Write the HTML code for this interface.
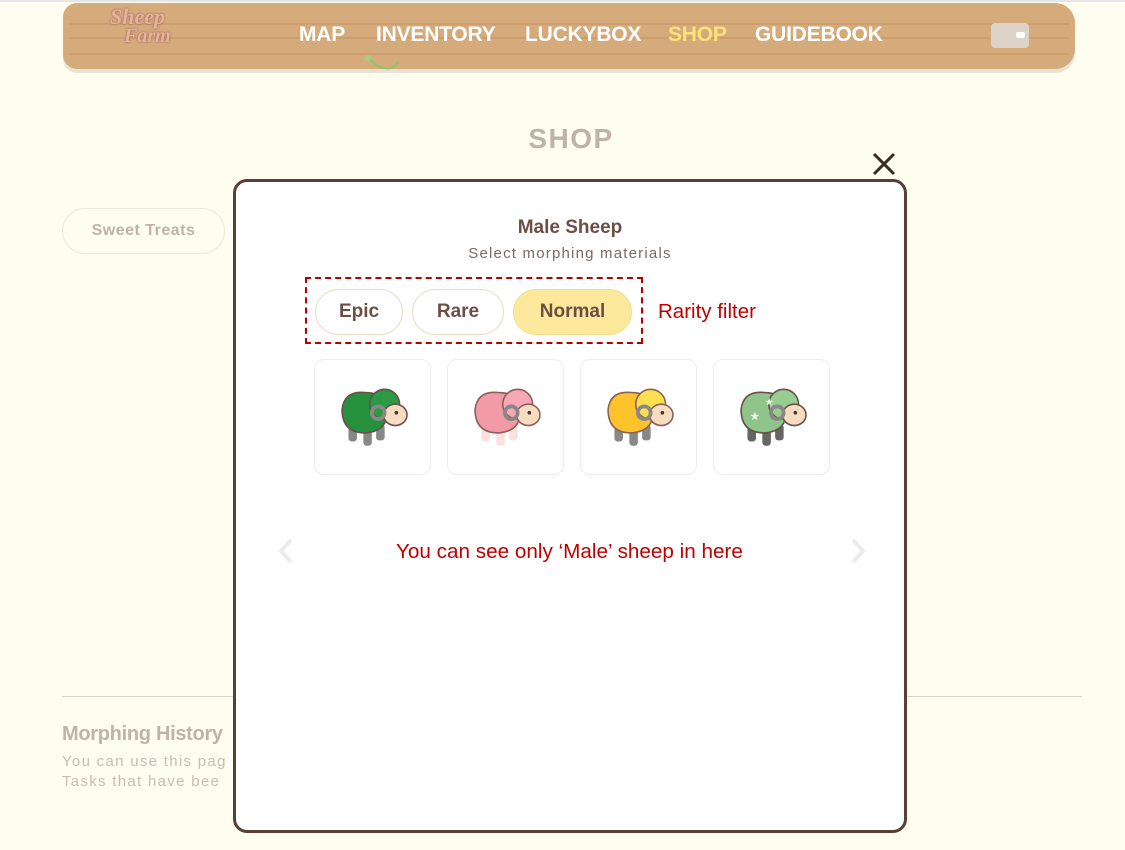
<!DOCTYPE html>
<html><head><meta charset="utf-8">
<style>
*{margin:0;padding:0;box-sizing:border-box}
body{width:1125px;height:850px;background:#fffcf0;position:relative;overflow:hidden;font-family:"Liberation Sans",sans-serif}
.topline{position:absolute;left:0;top:0;width:1125px;height:2px;background:#e6e6e6}
.hdr{position:absolute;left:63px;top:3px;width:1012px;height:66px;background:#d6ab7c;border-radius:14px 20px 20px 14px;box-shadow:0 4px 0 #e8e2d4}
.hdr .ln{position:absolute;left:6px;right:6px;height:2px;background:#c99a6a;opacity:.7}
.nav{position:absolute;top:23px;font-weight:bold;font-size:21px;color:#fff;letter-spacing:-0.2px}
.logo{position:absolute;left:110px;top:8px;font-family:"Liberation Serif",serif;font-style:italic;font-weight:bold;color:#e8b0a0;font-size:22px;line-height:18px;text-shadow:0 0 2px #8a5a4a}
.wallet{position:absolute;left:991px;top:23px;width:38px;height:25px;background:#ddd2c8;border-radius:4px}
.wallet:after{content:"";position:absolute;right:4px;top:9px;width:9px;height:6px;background:#fff;border-radius:2px}
h1{position:absolute;left:0;width:1142px;text-align:center;top:123px;font-size:28px;color:#bfb2aa;font-weight:bold;letter-spacing:1.5px}
.sweet{position:absolute;left:62px;top:208px;width:163px;height:46px;border:1px solid #eee8dc;border-radius:23px;text-align:center;line-height:44px;font-weight:bold;font-size:16px;color:#c0b2aa;letter-spacing:.5px}
.hr{position:absolute;left:62px;top:696px;width:1020px;height:1px;background:#ddd2ca}
.mh{position:absolute;left:62px;top:723px;font-weight:bold;font-size:20px;color:#bfb2aa;letter-spacing:-0.3px}
.mt{position:absolute;left:62px;top:752px;font-size:15px;line-height:20px;color:#c8bcb4;letter-spacing:1.3px}
.modal{position:absolute;left:233px;top:179px;width:674px;height:654px;background:#fff;border:3px solid #5a3f36;border-radius:14px}
.x{position:absolute;left:871px;top:151px}
.title{position:absolute;left:233px;width:674px;text-align:center;top:217px;font-weight:bold;font-size:19px;color:#6b4f45}
.sub{position:absolute;left:233px;width:674px;text-align:center;top:245px;font-size:15px;color:#7a6a64;letter-spacing:1.2px}
.dash{position:absolute;left:305px;top:277px;width:338px;height:67px;border:2px dashed #b40000}
.pill{position:absolute;top:289px;height:46px;border:1px solid #e8dccb;border-radius:23px;text-align:center;line-height:44px;font-weight:bold;font-size:19px;color:#6b4f45;background:#fff}
.rf{position:absolute;left:658px;top:300px;font-size:20.5px;color:#c00000}
.card{position:absolute;top:359px;width:117px;height:116px;border:1px solid #ececec;border-radius:10px;background:#fff}
.card svg{position:absolute;left:22px;top:24px}
.note{position:absolute;left:396px;top:540px;font-size:20.7px;color:#c00000}
.arr{position:absolute;top:537px}
</style></head><body>
<div class="topline"></div>
<div class="hdr"><div class="ln" style="top:20px"></div><div class="ln" style="top:34px"></div><div class="ln" style="top:50px"></div></div>
<div class="logo">Sheep<br><span style="font-size:20px;padding-left:14px">Farm</span></div>
<svg style="position:absolute;left:362px;top:52px" width="45" height="25"><path d="M6 4 Q12 14 22 16 Q32 18 36 10" stroke="#8fc46a" stroke-width="2" fill="none"/><circle cx="6" cy="6" r="3" fill="#a6d07e"/></svg>
<div class="nav" style="left:299px">MAP</div>
<div class="nav" style="left:376px">INVENTORY</div>
<div class="nav" style="left:525px">LUCKYBOX</div>
<div class="nav" style="left:668px;color:#fbe27a">SHOP</div>
<div class="nav" style="left:755px">GUIDEBOOK</div>
<div class="wallet"></div>
<h1>SHOP</h1>
<div class="sweet">Sweet Treats</div>
<div class="hr"></div>
<div class="mh">Morphing History</div>
<div class="mt">You can use this pag<br>Tasks that have bee</div>

<svg class="x" width="26" height="26"><path d="M3 3 L23 23 M23 3 L3 23" stroke="#3a2a20" stroke-width="3"/></svg>
<div class="modal"></div>
<div class="title">Male Sheep</div>
<div class="sub">Select morphing materials</div>
<div class="dash"></div>
<div class="pill" style="left:315px;width:88px">Epic</div>
<div class="pill" style="left:412px;width:92px">Rare</div>
<div class="pill" style="left:513px;width:119px;background:#fde99c;border-color:#f3dc90">Normal</div>
<div class="rf">Rarity filter</div>

<div class="card" style="left:314px"><svg width="74" height="66" viewBox="0 0 68 62"><rect x="10" y="38" width="8" height="16" rx="3" fill="#888"/><rect x="24" y="42" width="8" height="16" rx="3" fill="#888"/><rect x="36" y="38" width="8" height="15" rx="3" fill="#888"/><path d="M4 24 Q6 6 26 8 Q44 8 46 24 Q48 44 26 46 Q4 46 4 24Z" fill="#25913d" stroke="#6b5048" stroke-width="1.5"/><circle cx="44" cy="19" r="14" fill="#2a9a45" stroke="#6b5048" stroke-width="1.5"/><ellipse cx="54" cy="29" rx="11" ry="10" fill="#f8dcc2" stroke="#6b5048" stroke-width="1.5"/><circle cx="38" cy="27" r="6" fill="none" stroke="#888" stroke-width="3.5"/><circle cx="55" cy="27" r="1.7" fill="#4a3530"/></svg></div>
<div class="card" style="left:447px"><svg width="74" height="66" viewBox="0 0 68 62"><rect x="10" y="38" width="8" height="16" rx="3" fill="#fbe0dc"/><rect x="24" y="42" width="8" height="16" rx="3" fill="#fbe0dc"/><rect x="36" y="38" width="8" height="15" rx="3" fill="#fbe0dc"/><path d="M4 24 Q6 6 26 8 Q44 8 46 24 Q48 44 26 46 Q4 46 4 24Z" fill="#f29aa8" stroke="#8a6058" stroke-width="1.5"/><circle cx="44" cy="19" r="14" fill="#f6a8b4" stroke="#8a6058" stroke-width="1.5"/><ellipse cx="54" cy="29" rx="11" ry="10" fill="#f8dcc2" stroke="#8a6058" stroke-width="1.5"/><circle cx="38" cy="27" r="6" fill="none" stroke="#888" stroke-width="3.5"/><circle cx="55" cy="27" r="1.7" fill="#4a3530"/></svg></div>
<div class="card" style="left:580px"><svg width="74" height="66" viewBox="0 0 68 62"><rect x="10" y="38" width="8" height="16" rx="3" fill="#888"/><rect x="24" y="42" width="8" height="16" rx="3" fill="#888"/><rect x="36" y="38" width="8" height="15" rx="3" fill="#888"/><path d="M4 24 Q6 6 26 8 Q44 8 46 24 Q48 44 26 46 Q4 46 4 24Z" fill="#fcc42a" stroke="#8a6058" stroke-width="1.5"/><circle cx="44" cy="19" r="14" fill="#fde050" stroke="#8a6058" stroke-width="1.5"/><ellipse cx="54" cy="29" rx="11" ry="10" fill="#f8dcc2" stroke="#8a6058" stroke-width="1.5"/><circle cx="38" cy="27" r="6" fill="none" stroke="#888" stroke-width="3.5"/><circle cx="55" cy="27" r="1.7" fill="#4a3530"/></svg></div>
<div class="card" style="left:713px"><svg width="74" height="66" viewBox="0 0 68 62"><rect x="10" y="38" width="8" height="16" rx="3" fill="#666"/><rect x="24" y="42" width="8" height="16" rx="3" fill="#666"/><rect x="36" y="38" width="8" height="15" rx="3" fill="#666"/><path d="M4 24 Q6 6 26 8 Q44 8 46 24 Q48 44 26 46 Q4 46 4 24Z" fill="#8fc58a" stroke="#6b5048" stroke-width="1.5"/><circle cx="44" cy="19" r="14" fill="#98cc90" stroke="#6b5048" stroke-width="1.5"/><text x="12" y="34" font-size="11" fill="#eef8ea">★</text><text x="26" y="20" font-size="10" fill="#eef8ea">★</text><ellipse cx="54" cy="29" rx="11" ry="10" fill="#f8dcc2" stroke="#6b5048" stroke-width="1.5"/><circle cx="38" cy="27" r="6" fill="none" stroke="#888" stroke-width="3.5"/><circle cx="55" cy="27" r="1.7" fill="#4a3530"/></svg></div>

<svg class="arr" style="left:276px" width="20" height="30"><path d="M15 3 L5 14 L15 25" stroke="#ececec" stroke-width="4" fill="none"/></svg>
<svg class="arr" style="left:848px" width="20" height="30"><path d="M5 3 L15 14 L5 25" stroke="#ececec" stroke-width="4" fill="none"/></svg>
<div class="note">You can see only ‘Male’ sheep in here</div>
</body></html>
